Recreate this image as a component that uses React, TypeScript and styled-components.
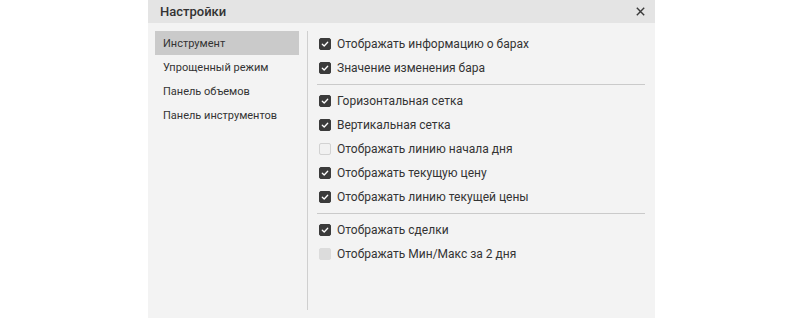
import React from 'react';
import styled, { createGlobalStyle } from 'styled-components';

const GlobalStyle = createGlobalStyle`
  html, body {
    margin: 0;
    padding: 0;
    background: #ffffff;
    font-family: Roboto, "Noto Sans", Arial, sans-serif;
  }
`;

const Page = styled.div`
  width: 797px;
  height: 318px;
  overflow: hidden;
  display: flex;
  justify-content: flex-start;
  padding-left: 148px;
  box-sizing: border-box;
`;

const Dialog = styled.div`
  width: 507px;
  display: flex;
  flex-direction: column;
  background: #f3f3f3;
`;

const Header = styled.div`
  height: 23px;
  background: #e4e4e4;
  display: flex;
  align-items: center;
  justify-content: space-between;
  padding: 0 8px 0 12px;
`;

const Title = styled.span`
  font-size: 13px;
  font-weight: 500;
  color: #333333;
`;

const CloseButton = styled.button`
  border: none;
  background: transparent;
  padding: 0;
  width: 14px;
  height: 14px;
  display: flex;
  align-items: center;
  justify-content: center;
  cursor: pointer;
`;

const Body = styled.div`
  height: 295px;
  box-sizing: border-box;
  display: flex;
  padding: 8px 10px 8px 7px;
`;

const Sidebar = styled.div`
  width: 144px;
  margin-right: 8px;
  display: flex;
  flex-direction: column;
`;

const NavItem = styled.div<{ active?: boolean }>`
  height: 24px;
  display: flex;
  align-items: center;
  padding-left: 8px;
  font-size: 11px;
  color: #333333;
  background: ${props => (props.active ? '#cacaca' : 'transparent')};
`;

const Content = styled.div`
  flex: 1;
  border-left: 1px solid #cfcfcf;
  padding: 1px 0 0 9px;
  display: flex;
  flex-direction: column;
`;

const Divider = styled.div`
  height: 1px;
  background: #cacaca;
  margin: 4px 0;
`;

const Row = styled.label`
  height: 24px;
  display: flex;
  align-items: center;
  padding-left: 2px;
  gap: 6px;
  font-size: 12px;
  color: #333333;
`;

const Box = styled.span<{ checked?: boolean; disabled?: boolean }>`
  width: 12px;
  height: 12px;
  box-sizing: border-box;
  border-radius: 2px;
  display: flex;
  align-items: center;
  justify-content: center;
  background: ${props =>
    props.checked ? '#3b3b3b' : props.disabled ? '#dcdcdc' : '#f1f1f1'};
  border: 1px solid
    ${props => (props.checked ? '#3b3b3b' : props.disabled ? '#dcdcdc' : '#d2d2d2')};
`;

const Label = styled.span`
  color: #333333;
`;

type Option = { label: string; checked: boolean; disabled?: boolean };

const sections: Option[][] = [
  [
    { label: 'Отображать информацию о барах', checked: true },
    { label: 'Значение изменения бара', checked: true },
  ],
  [
    { label: 'Горизонтальная сетка', checked: true },
    { label: 'Вертикальная сетка', checked: true },
    { label: 'Отображать линию начала дня', checked: false },
    { label: 'Отображать текущую цену', checked: true },
    { label: 'Отображать линию текущей цены', checked: true },
  ],
  [
    { label: 'Отображать сделки', checked: true },
    { label: 'Отображать Мин/Макс за 2 дня', checked: false, disabled: true },
  ],
];

const navItems = ['Инструмент', 'Упрощенный режим', 'Панель объемов', 'Панель инструментов'];

const CheckMark = () => (
  <svg width="8" height="8" viewBox="0 0 8 8">
    <path d="M1.3 4.2 L3.2 6 L6.7 2.2" fill="none" stroke="#ffffff" strokeWidth="1.3" strokeLinecap="round" strokeLinejoin="round" />
  </svg>
);

const CloseIcon = () => (
  <svg width="9" height="9" viewBox="0 0 9 9">
    <path d="M0.8 0.8 L8.2 8.2 M8.2 0.8 L0.8 8.2" stroke="#3a3a3a" strokeWidth="1.4" />
  </svg>
);

const App: React.FC = () => {
  return (
    <>
      <GlobalStyle />
      <Page>
        <Dialog>
          <Header>
            <Title>Настройки</Title>
            <CloseButton aria-label="Закрыть">
              <CloseIcon />
            </CloseButton>
          </Header>
          <Body>
            <Sidebar>
              {navItems.map((item, i) => (
                <NavItem key={item} active={i === 0}>
                  {item}
                </NavItem>
              ))}
            </Sidebar>
            <Content>
              {sections.map((section, si) => (
                <React.Fragment key={si}>
                  {si > 0 && <Divider />}
                  {section.map(opt => (
                    <Row key={opt.label}>
                      <Box checked={opt.checked} disabled={opt.disabled}>
                        {opt.checked && <CheckMark />}
                      </Box>
                      <Label>{opt.label}</Label>
                    </Row>
                  ))}
                </React.Fragment>
              ))}
            </Content>
          </Body>
        </Dialog>
      </Page>
    </>
  );
};

export default App;
